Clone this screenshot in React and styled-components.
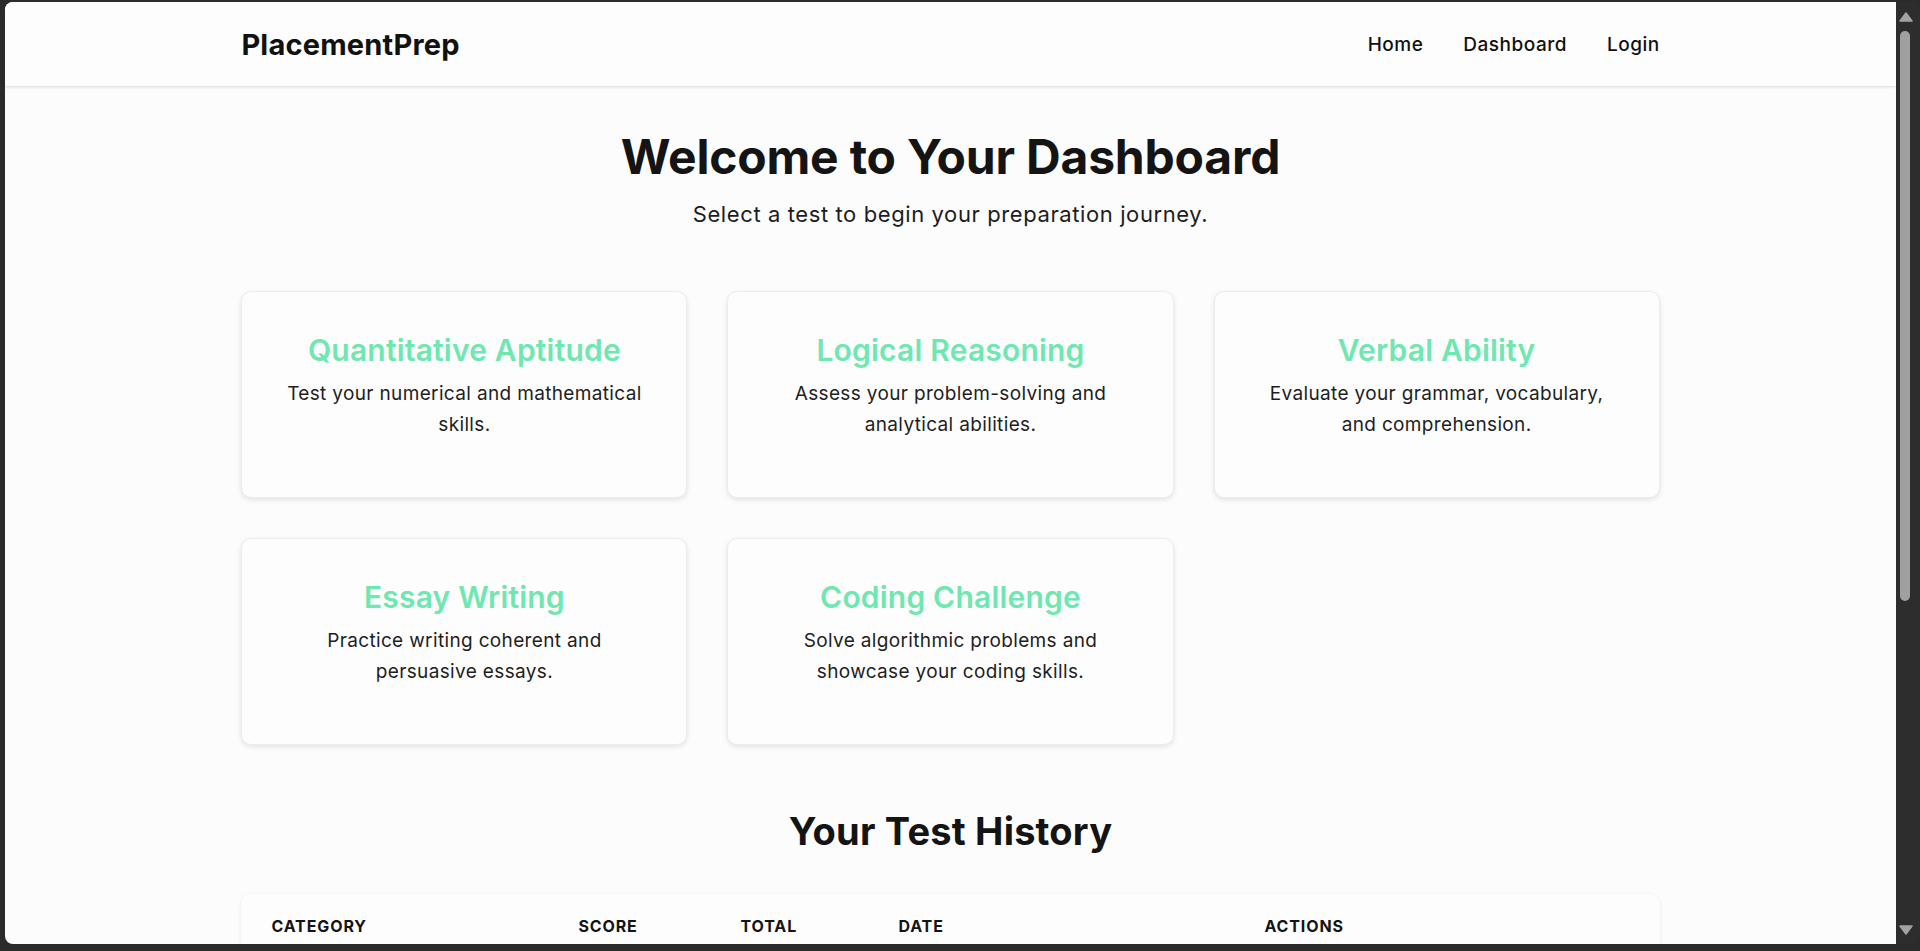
import React from "react";
import styled, { createGlobalStyle } from "styled-components";

const GlobalStyle = createGlobalStyle`
  html, body {
    margin: 0;
    padding: 0;
    height: 100%;
    overflow: hidden;
    background: #2b2b2b;
  }
  * { box-sizing: border-box; }
  #root { height: 100%; }
`;

const Frame = styled.div`
  display: flex;
  height: 951px;
  padding: 2px 0 7px 5px;
  background: #2b2b2b;
`;

const Viewport = styled.div`
  flex: 1;
  min-width: 0;
  background: #fcfcfc;
  border-radius: 8px 0 0 8px;
  overflow: hidden;
  font-family: "Inter", "Lato", sans-serif;
  color: #161616;
`;

const ScrollBar = styled.div`
  width: 24px;
  display: flex;
  flex-direction: column;
  align-items: flex-start;
  padding: 9px 0 8px 3px;
  background: #2d2d2d;
  border-radius: 0 8px 8px 0;
`;

const Thumb = styled.div`
  width: 10px;
  margin: 8px 0 0 1px;
  height: 570px;
  border-radius: 5px;
  background: #a0a0a0;
`;

const Spacer = styled.div`
  flex: 1;
`;

const Arrow = ({ down }) => (
  <svg width="14" height="12" viewBox="0 0 14 12">
    <polygon
      points={down ? "1,2 13,2 7,10" : "1,10 13,10 7,2"}
      fill="#a3a3a3"
      stroke="#a3a3a3"
      strokeWidth="1.5"
      strokeLinejoin="round"
    />
  </svg>
);

const NavBar = styled.header`
  height: 84px;
  background: #fdfdfd;
  box-shadow: 0 1px 3px rgba(0, 0, 0, 0.14);
  position: relative;
`;

const NavInner = styled.nav`
  width: 75%;
  height: 100%;
  margin: 0 auto;
  display: flex;
  align-items: center;
  justify-content: space-between;
`;

const Logo = styled.div`
  font-size: 29px;
  font-weight: 700;
  letter-spacing: 0.2px;
  color: #111;
`;

const NavLinks = styled.div`
  display: flex;
  gap: 40px;
`;

const NavLink = styled.a`
  font-size: 19px;
  font-weight: 500;
  letter-spacing: 0.5px;
  color: #111;
  text-decoration: none;
`;

const Main = styled.main`
  width: 75%;
  margin: 0 auto;
  padding-top: 42px;
`;

const Title = styled.h1`
  margin: 0;
  text-align: center;
  font-size: 48px;
  line-height: 58px;
  font-weight: 700;
  letter-spacing: -0.2px;
  color: #141414;
`;

const Subtitle = styled.p`
  margin: 13px 0 0;
  text-align: center;
  font-size: 22px;
  line-height: 30px;
  letter-spacing: 0.6px;
  color: #1c1c1c;
`;

const Grid = styled.div`
  display: grid;
  grid-template-columns: repeat(3, 1fr);
  gap: 40px;
  margin-top: 62px;
`;

const Card = styled.div`
  background: #fdfdfd;
  border: 1px solid #ececec;
  border-radius: 10px;
  box-shadow: 0 2px 5px rgba(0, 0, 0, 0.1);
  padding: 41px 40px 57px;
  text-align: center;
  cursor: pointer;
`;

const CardTitle = styled.h3`
  margin: 0;
  font-size: 30px;
  line-height: 35px;
  font-weight: 600;
  letter-spacing: 0.2px;
  color: #6ee7b0;
`;

const CardText = styled.p`
  margin: 10px 0 0;
  font-size: 19px;
  line-height: 31px;
  letter-spacing: 0.35px;
  color: #1e1e1e;
`;

const SectionTitle = styled.h2`
  margin: 65px 0 0;
  text-align: center;
  font-size: 38px;
  line-height: 43px;
  font-weight: 700;
  letter-spacing: 0.2px;
  color: #141414;
`;

const TableCard = styled.div`
  margin-top: 41px;
  background: #fdfdfd;
  border-radius: 10px;
  box-shadow: 0 1px 4px rgba(0, 0, 0, 0.08);
  padding: 8px 15px 20px;
`;

const Table = styled.table`
  width: 100%;
  border-collapse: collapse;
  table-layout: fixed;
`;

const Th = styled.th`
  text-align: left;
  padding: 14px 15px;
  font-size: 16px;
  font-weight: 700;
  letter-spacing: 0.9px;
  text-transform: uppercase;
  color: #141414;
  border-bottom: 1px solid #e5e5e5;
`;

const Td = styled.td`
  padding: 14px 15px;
  font-size: 16px;
  color: #222;
  border-bottom: 1px solid #eee;
`;

const ActionButton = styled.button`
  font: inherit;
  font-size: 14px;
  padding: 6px 14px;
  border: none;
  border-radius: 6px;
  background: #6ee7b0;
  color: #111;
`;

const tests = [
  { title: "Quantitative Aptitude", text: "Test your numerical and mathematical skills." },
  { title: "Logical Reasoning", text: "Assess your problem-solving and analytical abilities." },
  { title: "Verbal Ability", text: "Evaluate your grammar, vocabulary, and comprehension." },
  { title: "Essay Writing", text: "Practice writing coherent and persuasive essays." },
  { title: "Coding Challenge", text: "Solve algorithmic problems and showcase your coding skills." },
];

const history = [
  { cat: "Quantitative Aptitude", score: 8, total: 10, date: "12/03/2024" },
  { cat: "Logical Reasoning", score: 7, total: 10, date: "11/03/2024" },
];

export default function App() {
  return (
    <>
      <GlobalStyle />
      <Frame>
        <Viewport>
          <NavBar>
            <NavInner>
              <Logo>PlacementPrep</Logo>
              <NavLinks>
                <NavLink href="#">Home</NavLink>
                <NavLink href="#">Dashboard</NavLink>
                <NavLink href="#">Login</NavLink>
              </NavLinks>
            </NavInner>
          </NavBar>
          <Main>
            <Title>Welcome to Your Dashboard</Title>
            <Subtitle>Select a test to begin your preparation journey.</Subtitle>
            <Grid>
              {tests.map((t) => (
                <Card key={t.title}>
                  <CardTitle>{t.title}</CardTitle>
                  <CardText>{t.text}</CardText>
                </Card>
              ))}
            </Grid>
            <SectionTitle>Your Test History</SectionTitle>
            <TableCard>
              <Table>
                <colgroup>
                  <col style={{ width: "307px" }} />
                  <col style={{ width: "162px" }} />
                  <col style={{ width: "158px" }} />
                  <col style={{ width: "366px" }} />
                  <col />
                </colgroup>
                <thead>
                  <tr>
                    <Th>Category</Th>
                    <Th>Score</Th>
                    <Th>Total</Th>
                    <Th>Date</Th>
                    <Th>Actions</Th>
                  </tr>
                </thead>
                <tbody>
                  {history.map((h) => (
                    <tr key={h.cat}>
                      <Td>{h.cat}</Td>
                      <Td>{h.score}</Td>
                      <Td>{h.total}</Td>
                      <Td>{h.date}</Td>
                      <Td>
                        <ActionButton>View</ActionButton>
                      </Td>
                    </tr>
                  ))}
                </tbody>
              </Table>
            </TableCard>
          </Main>
        </Viewport>
        <ScrollBar>
          <Arrow />
          <Thumb />
          <Spacer />
          <Arrow down />
        </ScrollBar>
      </Frame>
    </>
  );
}
